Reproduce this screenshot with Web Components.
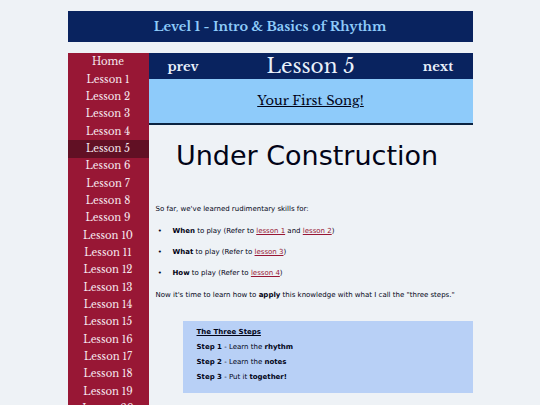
<!DOCTYPE html>
<html lang="en">
<head>
<meta charset="utf-8">
<meta name="viewport" content="width=device-width, initial-scale=1">
<title>Lesson 5 - Your First Song!</title>
<style>
  :root {
    --navy: #09235f;
    --sky: #8ecbfa;
    --crimson: #981735;
    --maroon: #611024;
    --paper: #eef2f6;
    --ink: #020417;
    --serif: "Libre Baskerville", "Liberation Serif", serif;
    --sans: "DejaVu Sans", sans-serif;
  }
  html { scrollbar-width: none; }
  body { margin: 0; background: var(--paper); color: var(--ink); font-family: var(--sans); }
</style>
</head>
<body>
<lesson-page>
  <level-banner slot="banner">Level 1 - Intro &amp; Basics of Rhythm</level-banner>
  <lesson-nav slot="nav" count="20" current="5"></lesson-nav>
  <lesson-header prev="#lesson-4" next="#lesson-6">
    Lesson 5
    <span slot="subtitle">Your First Song!</span>
  </lesson-header>
  <lesson-content></lesson-content>
</lesson-page>

<script>
  class BaseElement extends HTMLElement {
    connectedCallback() {
      if (this.shadowRoot) return;
      this.attachShadow({ mode: "open" }).innerHTML = this.render();
    }
  }

  customElements.define("lesson-page", class extends BaseElement {
    render() {
      return `
        <style>
          :host { display: block; width: 75%; margin: 0 auto; padding-top: 11px; }
          .columns { display: grid; grid-template-columns: 1fr 4fr; margin-top: 11px; }
          main { min-width: 0; }
        </style>
        <slot name="banner"></slot>
        <div class="columns">
          <slot name="nav"></slot>
          <main><slot></slot></main>
        </div>`;
    }
  });

  customElements.define("level-banner", class extends BaseElement {
    render() {
      return `
        <style>
          :host { display: block; background: var(--navy); color: var(--sky); }
          h1 { margin: 0; font: bold 13px/31px var(--serif); text-align: center; }
        </style>
        <h1><slot></slot></h1>`;
    }
  });

  customElements.define("lesson-nav", class extends BaseElement {
    render() {
      const current = Number(this.getAttribute("current"));
      const count = Number(this.getAttribute("count"));
      let items = `<li><a href="#home">Home</a></li>`;
      for (let n = 1; n <= count; n++) {
        const mark = n === current ? ` aria-current="page"` : "";
        items += `<li><a href="#lesson-${n}"${mark}>Lesson ${n}</a></li>`;
      }
      return `
        <style>
          :host { display: block; background: var(--crimson); }
          ul { display: grid; grid-auto-rows: 18px 17px 17px; margin: 0; padding: 0; list-style: none; }
          li { display: grid; }
          a { font: 10px/18px var(--serif); color: #f6e8ef; text-align: center; text-decoration: none; }
          a[aria-current] { background: var(--maroon); }
        </style>
        <nav aria-label="Lessons"><ul>${items}</ul></nav>`;
    }
  });

  customElements.define("lesson-header", class extends BaseElement {
    render() {
      return `
        <style>
          :host { display: block; font-family: var(--serif); }
          .bar { display: grid; grid-template-columns: 1fr 2fr 1fr; align-items: center;
                 background: var(--navy); color: #e9f1fb; text-align: center; }
          .bar a { color: inherit; text-decoration: none; font-size: 13px; font-weight: bold; }
          .bar a:first-child { padding-right: 12px; }
          .bar a:last-child { padding-left: 12px; }
          h2 { margin: 0; font-size: 20px; line-height: 26px; font-weight: normal; }
          h3 { margin: 0; padding: 11px 0; background: var(--sky); border-bottom: 2px solid #0b2340;
               font-size: 13px; line-height: 22px; font-weight: normal;
               text-align: center; text-decoration: underline; }
        </style>
        <div class="bar">
          <a href="${this.getAttribute("prev")}">prev</a>
          <h2><slot></slot></h2>
          <a href="${this.getAttribute("next")}">next</a>
        </div>
        <h3><slot name="subtitle"></slot></h3>`;
    }
  });

  customElements.define("lesson-content", class extends BaseElement {
    render() {
      return `
        <style>
          :host { display: block; padding-left: 7px; font-size: 7px; line-height: 9px; }
          a { color: var(--crimson); }
          p { margin: 0 0 13px; }
          .notice { margin: 0 14px 0 0; padding: 12px 0 31px; font-size: 27px; line-height: 37px; text-align: center; }
          ul { margin: 0 0 13px; padding-left: 17px; list-style-type: "•\\2003\\2002"; }
          li { margin-bottom: 12px; }
          steps-box { margin: 21px 0 0 27px; }
        </style>
        <p class="notice">Under Construction</p>
        <p>So far, we've learned rudimentary skills for:</p>
        <ul>
          <li><b>When</b> to play (Refer to <a href="#lesson-1">lesson 1</a> and <a href="#lesson-2">lesson 2</a>)</li>
          <li><b>What</b> to play (Refer to <a href="#lesson-3">lesson 3</a>)</li>
          <li><b>How</b> to play (Refer to <a href="#lesson-4">lesson 4</a>)</li>
        </ul>
        <p>Now it's time to learn how to <b>apply</b> this knowledge with what I call the "three steps."</p>
        <steps-box>
          <span slot="title">The Three Steps</span>
          <div><b>Step 1</b> - Learn the <b>rhythm</b></div>
          <div><b>Step 2</b> - Learn the <b>notes</b></div>
          <div><b>Step 3</b> - Put it <b>together!</b></div>
        </steps-box>`;
    }
  });

  customElements.define("steps-box", class extends BaseElement {
    render() {
      return `
        <style>
          :host { display: block; padding: 4px 14px 8px; background: #b8d0f6; line-height: 15px; }
          h4 { margin: 0; font-size: inherit; text-decoration: underline; }
        </style>
        <h4><slot name="title"></slot></h4>
        <slot></slot>`;
    }
  });
</script>
</body>
</html>
